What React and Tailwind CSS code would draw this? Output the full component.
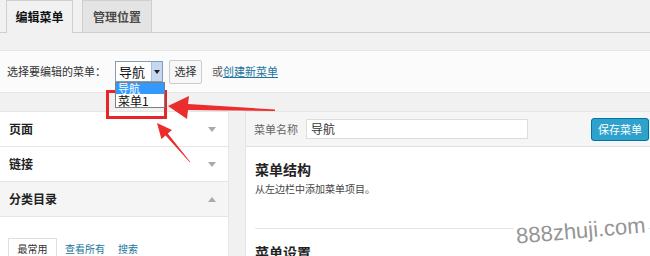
import React from "react";

const font = { fontFamily: '"Noto Sans CJK SC", "Noto Sans", sans-serif' };

const Caret = ({ up }) => (
  <svg width="8" height="5" viewBox="0 0 8 5" className="mr-[12px]">
    {up ? <path d="M0 5 L4 0 L8 5 Z" fill="#aaa" /> : <path d="M0 0 L8 0 L4 5 Z" fill="#aaa" />}
  </svg>
);

const Section = ({ title, open }) => (
  <div
    className={`h-[35px] flex items-center justify-between border-b border-[#e5e5e5] pl-[9px] ${open ? "bg-[#f5f5f5]" : "bg-white"}`}
  >
    <span className="text-[12px] font-bold text-[#222]">{title}</span>
    <Caret up={open} />
  </div>
);

export default function App() {
  return (
    <div className="w-[650px] h-[256px] overflow-hidden bg-[#f1f1f1] relative" style={font}>
      {/* tabs */}
      <div className="h-[33px] flex items-end border-b border-[#cfcfcf] pl-[6px]">
        <div className="w-[67px] h-[33px] -mb-px bg-[#f1f1f1] border border-b-0 border-[#cfcfcf] flex items-center justify-center text-[12px] font-bold text-[#111]">
          编辑菜单
        </div>
        <div className="ml-[9px] w-[70px] h-[32px] bg-[#e4e4e4] border border-b-0 border-[#cfcfcf] flex items-center justify-center text-[12px] font-semibold text-[#4a4a4a]">
          管理位置
        </div>
      </div>

      {/* manage menus */}
      <div className="mt-[17px] h-[43px] bg-[#fbfbfb] border-y border-[#e5e5e5] flex items-center pl-[7px] text-[11px] text-[#333]">
        <span>选择要编辑的菜单：</span>
        <div className="relative ml-[9px] w-[48px] h-[21px] bg-white border border-[#7f9db9] flex items-center">
          <span className="pl-[3px] text-[13px] text-[#111] flex-1">导航</span>
          <div className="w-[11px] h-[19px] bg-[#c5d8ef] border-l border-[#a8c0df] flex items-center justify-center">
            <svg width="6" height="4" viewBox="0 0 6 4">
              <path d="M0 0 L6 0 L3 4 Z" fill="#222" />
            </svg>
          </div>
          {/* open dropdown */}
          <div className="absolute left-[-1px] top-[20px] w-[50px] bg-white border border-[#7f7f7f] z-10">
            <div className="h-[11px] bg-[#3399ff] text-white text-[11px] leading-[11px] pl-[2px]">导航</div>
            <div className="h-[13px] text-[12px] leading-[13px] text-[#111] pl-[2px]">菜单1</div>
          </div>
        </div>
        <div className="ml-[6px] h-[24px] w-[33px] bg-[#f7f7f7] border border-[#ccc] rounded-[2px] flex items-center justify-center text-[11px] text-[#333]">
          选择
        </div>
        <span className="ml-[10px] text-[#555]">或</span>
        <span className="text-[#21759b] underline">创建新菜单</span>
      </div>

      {/* columns */}
      <div className="mt-[18px] flex">
        <div className="w-[229px] shrink-0 bg-white border-y border-r border-[#e5e5e5]">
          <Section title="页面" />
          <Section title="链接" />
          <Section title="分类目录" open />
          <div className="h-[60px] pl-[8px] pt-[21px] flex items-start text-[10px]">
            <div className="w-[49px] h-[20px] border border-b-0 border-[#dfdfdf] bg-white flex items-center justify-center text-[#333]">
              最常用
            </div>
            <span className="ml-[8px] mt-[3px] text-[#21759b]">查看所有</span>
            <span className="ml-[13px] mt-[3px] text-[#21759b]">搜索</span>
          </div>
        </div>

        <div className="ml-[16px] w-[420px] shrink-0 bg-white border border-[#e5e5e5]">
          <div className="h-[35px] bg-[#f5f5f5] border-b border-[#dfdfdf] flex items-center pl-[8px]">
            <span className="text-[11px] text-[#666]">菜单名称</span>
            <div className="ml-[8px] w-[222px] h-[20px] bg-white border border-[#ddd] flex items-center pl-[4px] text-[12px] text-[#333]">
              导航
            </div>
            <div className="ml-[63px] w-[58px] h-[23px] bg-[#2ea2cc] border border-[#0074a2] rounded-[3px] flex items-center justify-center text-[11px] text-white">
              保存菜单
            </div>
          </div>
          <div className="pl-[9px] pt-[12px]">
            <div className="text-[14px] font-bold text-[#222] leading-[20px]">菜单结构</div>
            <div className="mt-[3px] text-[10px] text-[#444] leading-[14px]">从左边栏中添加菜单项目。</div>
            <div className="mt-[32px] border-t border-[#e5e5e5]" />
            <div className="mt-[13px] text-[14px] font-bold text-[#222] leading-[20px]">菜单设置</div>
          </div>
        </div>
      </div>

      {/* annotation: red box and arrows */}
      <div className="absolute left-[106px] top-[90px] w-[61px] h-[29px] border-[3px] border-[#e8262a]" />
      <svg className="absolute left-0 top-0 pointer-events-none" width="650" height="256">
        <polygon
          points="168,106 189,96 188,104 275,109.5 275,111 188,110 187,119"
          fill="#ec2d2d"
        />
        <polygon
          points="157,123 172,130 167.8,133.4 190.3,162 189.7,162.3 165.6,135.4 161.4,139"
          fill="#ec2d2d"
        />
      </svg>

      {/* watermark */}
      <div
        className="absolute left-[514px] top-[218px] text-[22px] text-[#959595] rotate-[-5deg] bg-white px-[2px] leading-[26px]"
        style={{ fontFamily: '"Liberation Sans", Arial, sans-serif' }}
      >
        888zhuji.com
      </div>
    </div>
  );
}
